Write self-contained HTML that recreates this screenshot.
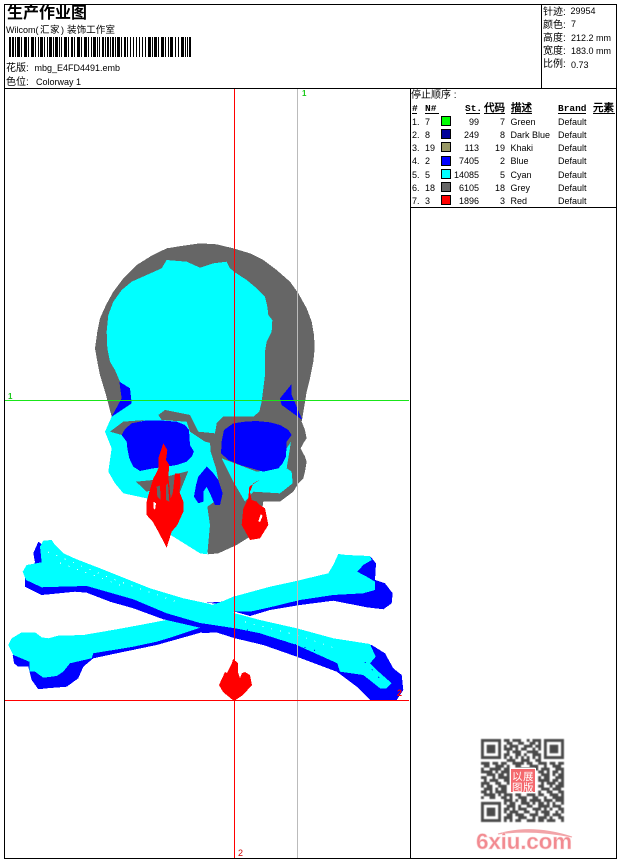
<!DOCTYPE html>
<html><head><meta charset="utf-8"><style>
html,body{margin:0;padding:0;background:#fff;width:620px;height:860px;overflow:hidden}
svg{display:block}
text{font-family:"Liberation Sans","WenQuanYi Zen Hei","Noto Sans CJK SC",sans-serif;font-size:9px;fill:#000}
.c{font-size:10px}
.h{font-family:"Liberation Mono","WenQuanYi Zen Hei",monospace;font-size:9.5px;font-weight:bold}
.e{text-anchor:end}
</style></head><body>
<svg width="620" height="860" viewBox="0 0 620 860" xmlns="http://www.w3.org/2000/svg">
<rect width="620" height="860" fill="#fff"/>

<!-- bones -->
<g shape-rendering="crispEdges">
<path fill="#00f" d="M370 556L376 563.300L375 580L385 583.300L392.700 593.300L391.700 603.300L383.300 609.300L366.700 607.300L333.300 600.700L300 605L270 610L250 616L235 611.700L228.300 605L206.700 602.700L221.700 601.700L300 590Z"/>
<path fill="#00f" d="M12.700 655L14 663.300L18.300 666.700L28.300 666.700L31.700 680L38.300 689.300L46.700 688.300L66.700 686.700L78.300 678.300L83.300 666.700L93.300 658.300L113.300 654L156.700 645L210 630L210 620L60 650Z"/>
<path fill="#0ff" d="M8.300 645L11.700 638.300L21.700 632.300L35 632.300L41.700 637.300L48.300 638.300L58.300 635.700L83.300 635L116.700 629.300L140 625L170 619.300L221.700 601.700L233.300 596.700L270 586.700L293.300 581.700L328.300 573.300L333.300 565L338.300 554L346.700 555L370 556L371.700 560L363.300 565L357.300 571.700L366.700 576.700L375 581.700L375 590L363.300 593.300L333.300 595L300 600L270 607.300L250 611.700L235 611.700L200 627.700L173.300 636.700L156.700 641.700L133.300 646.700L113.300 650L93.300 653.300L91.700 658.300L70 663.300L63.300 671.700L56.700 676L43.300 677.700L35 671.700L29.300 671.700L29.300 661.700L13.300 655Z"/>
<path fill="#00f" d="M38.300 541.700L33.300 553.300L35 562.300L25 576.700L25 586.700L41.700 595L75 591.700L86.700 592.700L110 601.700L133.300 608.300L163.300 619.300L200 627.700L202 633L216.700 632.500L235 638.300L263.300 645L296.700 656.700L336.700 671.700L356.700 686.700L370 700L396.700 700L403.300 690L401.700 675L393.300 668.300L385 653.300L371.700 645L297 635L235 620L200 612L100 575L50 550Z"/>
<path fill="#0ff" d="M43.300 540.700L51.700 540L55 545L63.300 553.300L76.700 559.300L100 568.300L116.700 575L150 588.300L183.300 598.300L210 604L220 608.300L235 613.300L260 620L296.700 628.300L333.300 638.300L370 644L375.700 656.700L370 663.300L376.700 670L391.700 683.300L386.700 688.300L380 688.300L363.300 675L340 671.700L337.300 663.300L296.700 645L260 633.300L235 628.300L200 623L166.700 613.300L133.300 599.300L106.700 591.700L86.700 586L60 586.700L41.700 587.300L26 580L22.700 571.700L26.700 565L41.700 562.300L40 546.700Z"/>
</g>
<g fill="none" stroke="#fff" stroke-width="1" stroke-dasharray="1 8" shape-rendering="crispEdges">
<path d="M48 552L110 578L180 603"/><path d="M60 563L120 585"/><path d="M245 622L300 636L340 650"/>
</g>
<g fill="none" stroke="#00f" stroke-width="1" stroke-dasharray="1 9" shape-rendering="crispEdges">
<path d="M247 630L320 652"/><path d="M365 662L385 684"/>
</g>

<!-- skull -->
<g transform="translate(90,235) scale(.33333)" shape-rendering="crispEdges">
<path fill="#666" d="M330 25L380 28L430 40L480 55L520 75L560 105L600 140L625 175L650 220L665 260L672 300L674 340L670 380L660 430L650 470L642 520L635 560L645 585L650 610L640 625L632 640L645 665L650 680L645 710L640 730L625 745L610 770L570 800L520 800L510 870L480 905L440 930L385 955L355 958L300 800L65 545L48 480L30 420L22 380L15 340L22 290L30 250L48 210L70 170L100 130L140 90L185 62L230 40L280 32Z"/>
<path fill="#0ff" d="M230 75L290 80L330 98L370 85L410 80L420 100L435 112L470 135L500 160L525 185L532 215L535 240L547 255L545 290L530 320L525 350L525 420L515 500L508 530L490 545L400 545L380 565L375 595L360 620L362 650L378 700L395 785L352 815L360 870L352 958L330 955L290 930L250 905L210 880L170 790L100 775L75 745L55 710L65 640L45 590L65 545L95 495L90 440L75 405L60 380L52 340L50 290L55 240L70 200L95 165L125 140L215 100Z"/>
<path fill="#0ff" d="M395 670L430 740L465 800L490 770L570 775L608 745L605 710L590 700L603 620L590 640L565 700L500 710Z"/>
<path fill="#666" d="M205 540L225 525L300 540L325 590L375 595L380 565L400 545L410 560L400 600L365 625L345 620L300 590L290 560L215 555Z"/>
<path fill="#666" d="M60 590L100 560L165 555L120 570L95 600Z"/>
<path fill="#666" d="M138 740L190 735L295 708L270 770L240 800L200 760L170 770Z"/>
<path fill="#00f" d="M95 600L105 582L125 565L165 557L220 557L260 560L285 570L297 585L300 630L312 650L305 665L290 680L260 690L230 695L190 700L150 708L130 695L118 670L112 640L110 620Z"/>
<path fill="#00f" d="M402 585L430 565L465 560L500 558L540 562L570 570L595 585L605 600L590 620L588 665L578 685L565 700L520 710L485 700L450 690L415 675L393 655L395 620Z"/>
<path fill="#00f" d="M88 440L120 460L125 505L65 545L95 490Z"/>
<path fill="#00f" d="M605 447L570 490L575 510L637 555L605 480Z"/>
<path fill="#00f" d="M350 695L370 715L385 735L398 775L390 810L375 810L362 780L350 755L340 770L340 800L325 805L312 785L318 750L325 725Z"/>
<path fill="#f00" d="M170 800L178 770L190 730L200 712L205 700L205 670L220 625L232 645L228 675L238 690L235 725L242 790L248 775L250 760L255 715L270 715L272 745L268 770L280 800L280 830L262 870L245 890L230 938L205 890L188 860L170 840Z"/>
<path fill="#666" d="M200 755L210 752L212 795L202 785ZM228 750L234 745L238 800L228 795Z"/>
<path fill="#f00" d="M512 733L490 745L480 770L485 795L500 800L510 810L525 820L535 870L510 910L480 915L455 870L460 820L475 790L478 755Z"/>
<path fill="#fff" d="M190 800L198 805L195 825L190 820ZM512 838L518 842L510 862L505 858Z"/>
</g>
<path fill="#f00" shape-rendering="crispEdges" d="M233 659L238 663L238 672L240 678L242 673L245 672L250 675L252 685L243 695L234 701L223 692L219 685L225 672L227 673L232 663Z"/>

<!-- frame and guide lines -->
<g shape-rendering="crispEdges">
<rect x="234" y="89" width="1" height="770" fill="#f00"/>
<rect x="297" y="89" width="1" height="770" fill="#bbb"/>
<rect x="4" y="400" width="405" height="1" fill="#19e619"/>
<rect x="4" y="700" width="405" height="1" fill="#f00"/>
<rect x="4" y="4" width="613" height="1" fill="#000"/>
<rect x="4" y="88" width="613" height="1" fill="#000"/>
<rect x="4" y="858" width="613" height="1" fill="#000"/>
<rect x="4" y="4" width="1" height="855" fill="#000"/>
<rect x="616" y="4" width="1" height="855" fill="#000"/>
<rect x="541" y="4" width="1" height="84" fill="#000"/>
<rect x="410" y="88" width="1" height="771" fill="#000"/>
<rect x="410" y="207" width="207" height="1" fill="#000"/>
</g>
<text x="302" y="96" style="fill:#19c819;font-weight:bold;font-size:8px">1</text>
<text x="8" y="399" style="fill:#19c819;font-weight:bold;font-size:8px">1</text>
<text x="238" y="856" style="fill:#c00">2</text>
<text x="397" y="696" style="fill:#f00;font-weight:bold">2</text>

<!-- header left -->
<text x="7" y="18" style="font-size:16px;font-weight:bold">生产作业图</text>
<text x="6" y="33">Wilcom(</text><text x="40" y="33" style="font-size:9.5px">汇</text><text x="50" y="33" style="font-size:9.5px">家</text><text x="61" y="33">)</text><text x="67" y="33" style="font-size:9.600px">装饰工作室</text>
<path shape-rendering="crispEdges" fill="#000" d="M9 37h2v20h-2zM12 37h2v20h-2zM15 37h1v20h-1zM17 37h3v20h-3zM21 37h1v20h-1zM24 37h3v20h-3zM28 37h1v20h-1zM31 37h3v20h-3zM35 37h1v20h-1zM38 37h1v20h-1zM40 37h3v20h-3zM44 37h1v20h-1zM47 37h1v20h-1zM49 37h3v20h-3zM53 37h1v20h-1zM55 37h3v20h-3zM59 37h1v20h-1zM61 37h1v20h-1zM64 37h3v20h-3zM68 37h1v20h-1zM71 37h2v20h-2zM74 37h1v20h-1zM77 37h3v20h-3zM81 37h1v20h-1zM84 37h3v20h-3zM88 37h1v20h-1zM91 37h1v20h-1zM93 37h3v20h-3zM97 37h1v20h-1zM99 37h1v20h-1zM102 37h2v20h-2zM105 37h1v20h-1zM107 37h2v20h-2zM110 37h1v20h-1zM112 37h2v20h-2zM115 37h1v20h-1zM117 37h3v20h-3zM121 37h1v20h-1zM124 37h2v20h-2zM127 37h1v20h-1zM130 37h1v20h-1zM133 37h1v20h-1zM136 37h1v20h-1zM139 37h1v20h-1zM142 37h1v20h-1zM145 37h1v20h-1zM148 37h3v20h-3zM152 37h1v20h-1zM154 37h3v20h-3zM158 37h1v20h-1zM161 37h3v20h-3zM165 37h1v20h-1zM168 37h1v20h-1zM170 37h3v20h-3zM175 37h1v20h-1zM178 37h1v20h-1zM181 37h3v20h-3zM185 37h1v20h-1zM187 37h1v20h-1zM189 37h2v20h-2z"/>
<text x="6" y="71" class="c">花版:</text><text x="34.500" y="71">mbg_E4FD4491.emb</text>
<text x="6" y="85" class="c">色位:</text><text x="36" y="85">Colorway 1</text>

<!-- header right -->
<text x="543" y="15" class="c">针迹:</text><text x="570.500" y="14">29954</text>
<text x="543" y="28" class="c">颜色:</text><text x="571" y="27">7</text>
<text x="543" y="41" class="c">高度:</text><text x="571" y="41">212.2 mm</text>
<text x="543" y="54" class="c">宽度:</text><text x="571" y="54">183.0 mm</text>
<text x="543" y="67" class="c">比例:</text><text x="571" y="68">0.73</text>

<!-- legend -->
<text x="411" y="98" class="c">停止顺序 :</text>
<text x="412" y="111" class="h">#</text><text x="425" y="111" class="h">N#</text>
<text x="465" y="111" class="h">St.</text><text x="484" y="111" class="h" style="font-size:10.500px">代码</text>
<text x="511" y="111" class="h" style="font-size:10.500px">描述</text><text x="558" y="111" class="h">Brand</text>
<text x="593" y="111" class="h" style="font-size:10.500px">元素</text>
<path shape-rendering="crispEdges" fill="#000" d="M412 113h5v1h-5zM425 113h14v1h-14zM466 113h14v1h-14zM484 113h21v1h-21zM511 113h21v1h-21zM558 113h28v1h-28zM593 113h22v1h-22z"/>

<g shape-rendering="crispEdges" stroke="#000">
<rect x="441.500" y="116.500" width="9" height="9" fill="#0f0"/>
<rect x="441.500" y="129.500" width="9" height="9" fill="#009"/>
<rect x="441.500" y="142.500" width="9" height="9" fill="#996"/>
<rect x="441.500" y="156.500" width="9" height="9" fill="#00f"/>
<rect x="441.500" y="169.500" width="9" height="9" fill="#0ff"/>
<rect x="441.500" y="182.500" width="9" height="9" fill="#666"/>
<rect x="441.500" y="195.500" width="9" height="9" fill="#f00"/>
</g>
<text x="412" y="125">1.</text><text x="425" y="125">7</text><text x="479" y="125" class="e">99</text><text x="505" y="125" class="e">7</text><text x="510.500" y="125">Green</text><text x="558" y="125">Default</text>
<text x="412" y="138">2.</text><text x="425" y="138">8</text><text x="479" y="138" class="e">249</text><text x="505" y="138" class="e">8</text><text x="510.500" y="138">Dark Blue</text><text x="558" y="138">Default</text>
<text x="412" y="151">3.</text><text x="425" y="151">19</text><text x="479" y="151" class="e">113</text><text x="505" y="151" class="e">19</text><text x="510.500" y="151">Khaki</text><text x="558" y="151">Default</text>
<text x="412" y="164">4.</text><text x="425" y="164">2</text><text x="479" y="164" class="e">7405</text><text x="505" y="164" class="e">2</text><text x="510.500" y="164">Blue</text><text x="558" y="164">Default</text>
<text x="412" y="178">5.</text><text x="425" y="178">5</text><text x="479" y="178" class="e">14085</text><text x="505" y="178" class="e">5</text><text x="510.500" y="178">Cyan</text><text x="558" y="178">Default</text>
<text x="412" y="191">6.</text><text x="425" y="191">18</text><text x="479" y="191" class="e">6105</text><text x="505" y="191" class="e">18</text><text x="510.500" y="191">Grey</text><text x="558" y="191">Default</text>
<text x="412" y="204">7.</text><text x="425" y="204">3</text><text x="479" y="204" class="e">1896</text><text x="505" y="204" class="e">3</text><text x="510.500" y="204">Red</text><text x="558" y="204">Default</text>

<!-- QR -->
<g transform="translate(481,739) scale(2.86)" style="filter:blur(.15px)">
<path fill="none" stroke="#4a4a4a" stroke-width="1" d="M.5 .5h6v6h-6zM22.500 .5h6v6h-6zM.5 22.500h6v6h-6z"/>
<path fill="#4a4a4a" d="M2 2h3v3h-3zM24 2h3v3h-3zM2 24h3v3h-3z"/>
<path fill="none" stroke="#4a4a4a" stroke-width="1" d="M8 .5h2M11 .5h3M16 .5h1M18 .5h3M9 1.500h2M13 1.500h2M17 1.500h2M20 1.500h1M8 2.500h1M10 2.500h3M15 2.500h3M19 2.500h2M8 3.500h3M12 3.500h1M14 3.500h2M18 3.500h1M20 3.500h1M9 4.500h1M11 4.500h3M16 4.500h4M8 5.500h2M12 5.500h2M15 5.500h1M18 5.500h3M8 6.500h1M10 6.500h1M12 6.500h1M14 6.500h1M16 6.500h1M18 6.500h1M20 6.500h1M9 7.500h3M14 7.500h3M19 7.500h2
M0 8.500h3M4 8.500h2M7 8.500h2M11 8.500h4M16 8.500h2M20 8.500h3M24 8.500h2M27 8.500h2M1 9.500h2M5 9.500h3M9 9.500h1M12 9.500h2M17 9.500h3M22 9.500h1M25 9.500h3M0 10.500h1M3 10.500h4M8 10.500h2M14 10.500h3M19 10.500h1M21 10.500h3M26 10.500h3M0 11.500h4M5 11.500h1M7 11.500h3M20 11.500h2M23 11.500h1M25 11.500h2M28 11.500h1M2 12.500h3M6 12.500h2M9 12.500h1M21 12.500h3M25 12.500h1M27 12.500h2M0 13.500h2M4 13.500h1M6 13.500h4M20 13.500h1M22 13.500h2M26 13.500h3M1 14.500h1M3 14.500h3M8 14.500h2M20 14.500h4M25 14.500h2M28 14.500h1M0 15.500h3M5 15.500h2M9 15.500h1M21 15.500h1M23 15.500h3M27 15.500h2M0 16.500h1M2 16.500h2M6 16.500h3M20 16.500h2M24 16.500h1M26 16.500h3M1 17.500h3M5 17.500h1M7 17.500h2M21 17.500h3M25 17.500h3M0 18.500h2M3 18.500h1M5 18.500h4M20 18.500h1M23 18.500h2M27 18.500h2M1 19.500h4M6 19.500h1M8 19.500h3M12 19.500h2M16 19.500h3M20 19.500h2M24 19.500h3M28 19.500h1M0 20.500h1M3 20.500h2M7 20.500h2M10 20.500h1M13 20.500h3M18 20.500h2M22 20.500h1M25 20.500h2M27 20.500h2
M8 21.500h3M12 21.500h1M14 21.500h2M17 21.500h4M22 21.500h3M26 21.500h3M8 22.500h1M10 22.500h2M14 22.500h3M18 22.500h1M20 22.500h2M23 22.500h1M25 22.500h1M28 22.500h1M9 23.500h3M13 23.500h1M16 23.500h2M20 23.500h4M25 23.500h3M8 24.500h2M11 24.500h1M13 24.500h3M18 24.500h3M22 24.500h1M24 24.500h1M27 24.500h2M8 25.500h1M10 25.500h3M15 25.500h2M19 25.500h1M21 25.500h3M26 25.500h1M28 25.500h1M9 26.500h2M12 26.500h2M14 26.500h1M17 26.500h3M22 26.500h2M25 26.500h3M8 27.500h3M13 27.500h3M18 27.500h1M20 27.500h3M24 27.500h1M27 27.500h2M8 28.500h1M10 28.500h1M12 28.500h2M16 28.500h3M20 28.500h2M23 28.500h3M28 28.500h1"/>
</g>
<rect x="510" y="768" width="26" height="25" fill="#fff"/>
<rect x="511" y="769" width="24" height="23" fill="#f4696e"/>
<text x="512" y="780" style="font-size:10.500px;fill:#fff">以</text><text x="523" y="780" style="font-size:10.500px;fill:#fff">展</text>
<text x="512" y="791" style="font-size:10.500px;fill:#fff">图</text><text x="523" y="791" style="font-size:10.500px;fill:#fff">版</text>

<!-- watermark -->
<path d="M498 834Q532 824 572 837Q532 829 498 834Z" fill="#f2a4a8" stroke="#f2a4a8"/>
<text x="476" y="849" style="font-size:22.500px;font-weight:bold;fill:#f28a90;stroke:#f9d2d4;stroke-width:.6px;letter-spacing:-.2px">6xiu.com</text>
</svg>
</body></html>
